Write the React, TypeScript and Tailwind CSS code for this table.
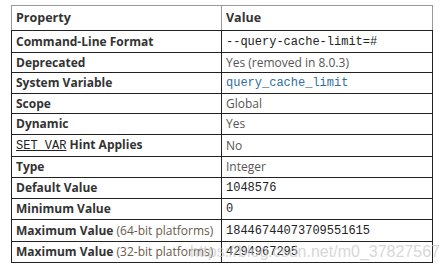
function Mono({ children, className = 'text-[#222]' }: { children: React.ReactNode; className?: string }) {
  return <code className={`font-['Liberation_Mono',monospace] text-[12px] font-normal ${className}`}>{children}</code>;
}

const rows: { key: React.ReactNode; value: React.ReactNode; h: string }[] = [
  { key: 'Command-Line Format', value: <Mono>--query-cache-limit=#</Mono>, h: 'h-[22px]' },
  { key: 'Deprecated', value: 'Yes (removed in 8.0.3)', h: 'h-[20px]' },
  { key: 'System Variable', value: <Mono className="text-[#2f6f9f]">query_cache_limit</Mono>, h: 'h-[21px]' },
  { key: 'Scope', value: 'Global', h: 'h-[20px]' },
  { key: 'Dynamic', value: 'Yes', h: 'h-[21px]' },
  {
    key: (
      <span>
        <Mono className="text-[#222] underline">SET_VAR</Mono> Hint Applies
      </span>
    ),
    value: 'No',
    h: 'h-[22px]',
  },
  { key: 'Type', value: 'Integer', h: 'h-[21px]' },
  { key: 'Default Value', value: <Mono>1048576</Mono>, h: 'h-[21px]' },
  { key: 'Minimum Value', value: <Mono>0</Mono>, h: 'h-[21px]' },
  {
    key: (
      <span>
        Maximum Value <span className="font-normal text-[#6a5a4a]">(64-bit platforms)</span>
      </span>
    ),
    value: <Mono>18446744073709551615</Mono>,
    h: 'h-[22px]',
  },
  {
    key: (
      <span>
        Maximum Value <span className="font-normal text-[#6a5a4a]">(32-bit platforms)</span>
      </span>
    ),
    value: <Mono>4294967295</Mono>,
    h: 'h-[22px]',
  },
];

export default function App() {
  return (
    <div className="w-[444px] h-[271px] bg-white pt-[5px] pl-[11px] relative overflow-hidden font-['Open_Sans',sans-serif] text-[12px]">
      <div className="w-[422px]">
        <div className="flex h-[25px] border-t border-x border-[#999] font-bold text-[#333] text-[12.5px]">
          <div className="w-[210px] border-r border-[#999] flex items-center pl-[4px]">Property</div>
          <div className="flex-1 flex items-center pl-[4px]">Value</div>
        </div>
        {rows.map((r, i) => (
          <div
            key={i}
            className={`flex ${r.h} border-t border-x border-[#222] ${i === rows.length - 1 ? 'border-b' : ''}`}
          >
            <div className="w-[210px] border-r border-[#222] flex items-center pl-[4px] font-bold text-[#333] whitespace-nowrap">
              {r.key}
            </div>
            <div className="flex-1 flex items-center pl-[4px] text-[#555] whitespace-nowrap">{r.value}</div>
          </div>
        ))}
      </div>
      <div className="absolute left-[190px] top-[242px] font-['Liberation_Sans',sans-serif] text-[16px] leading-[19px] text-[#c8c8c8] opacity-70 whitespace-nowrap">
        https://blog.csdn.net/m0_37827567
      </div>
    </div>
  );
}
